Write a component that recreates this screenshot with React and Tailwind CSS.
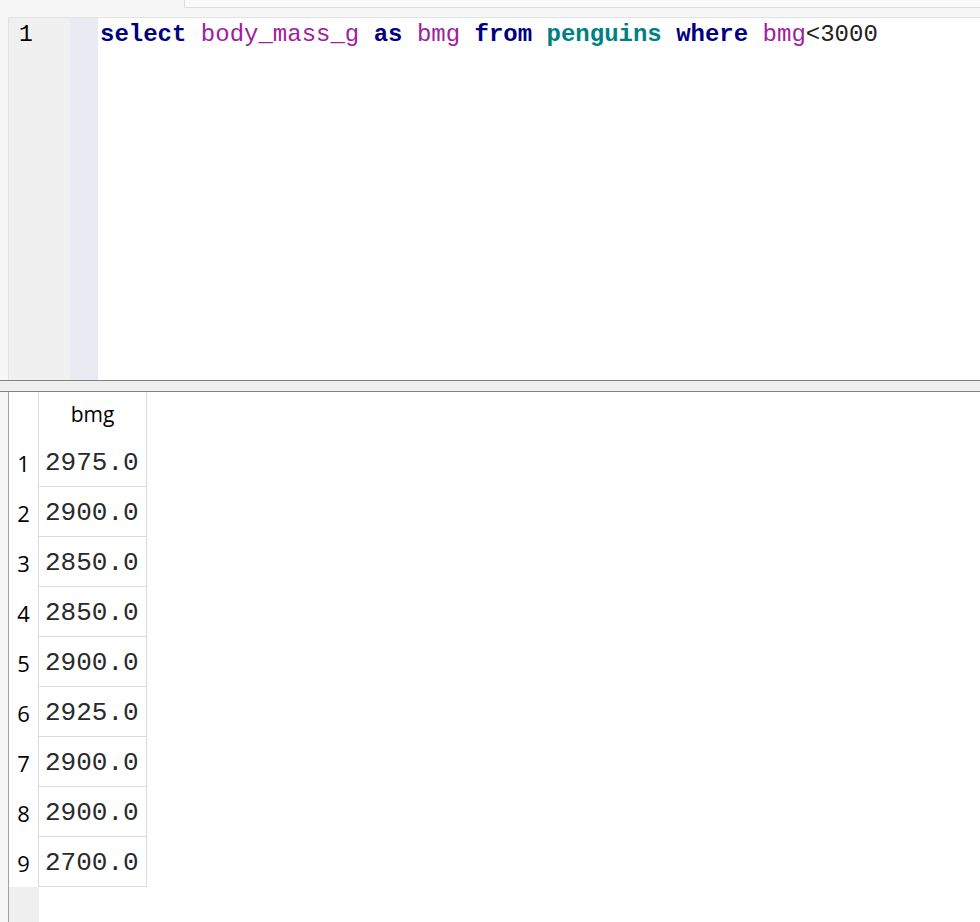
import React from 'react'

const rows = ['2975.0', '2900.0', '2850.0', '2850.0', '2900.0', '2925.0', '2900.0', '2900.0', '2700.0']

const mono = { fontFamily: '"Liberation Mono", "Courier New", monospace' }
const sans = { fontFamily: '"Open Sans", "Noto Sans", "Liberation Sans", sans-serif' }

function Editor() {
  return (
    <div className="flex h-[363px] border-t border-l border-[#e2e2e2] bg-white">
      <div className="w-[61px] bg-[#f0f0f0] pt-[1px] pl-[10px] text-[23px] leading-[32px] text-black" style={mono}>
        1
      </div>
      <div className="w-[28px] bg-[#eaeaf3]" />
      <div className="flex-1 pl-[2px] pt-[1px] text-[24px] leading-[32px] whitespace-pre" style={mono}>
        <span className="font-bold text-[#000080]">select</span>{' '}
        <span className="text-[#a020a0]">body_mass_g</span>{' '}
        <span className="font-bold text-[#000080]">as</span>{' '}
        <span className="text-[#a020a0]">bmg</span>{' '}
        <span className="font-bold text-[#000080]">from</span>{' '}
        <span className="font-bold text-[#008080]">penguins</span>{' '}
        <span className="font-bold text-[#000080]">where</span>{' '}
        <span className="text-[#a020a0]">bmg</span>
        <span className="text-[#222]">&lt;3000</span>
      </div>
    </div>
  )
}

function Results() {
  return (
    <div className="flex-1 flex flex-col bg-white border-l border-[#a0a0a0]">
      <div className="flex h-[45px]">
        <div className="w-[30px] border-r border-[#dcdcdc]" />
        <div className="w-[108px] border-r border-[#dcdcdc] flex items-center justify-center pt-[1px] text-[21px] text-black" style={sans}>
          bmg
        </div>
      </div>
      {rows.map((v, i) => (
        <div key={i} className="flex h-[50px]">
          <div className="w-[30px] border-r border-[#dcdcdc] flex items-center justify-center pt-[2px] text-[22px] text-black" style={sans}>
            {i + 1}
          </div>
          <div className="w-[108px] border-r border-b border-[#dcdcdc] flex items-center pl-[6px] pt-[3px] text-[26px] text-[#2a2a2a]" style={mono}>
            {v}
          </div>
        </div>
      ))}
      <div className="flex-1 w-[30px] bg-[#efefef]" />
    </div>
  )
}

export default function App() {
  return (
    <div className="w-[980px] h-[922px] bg-[#f7f7f7] flex flex-col overflow-hidden">
      <div className="h-[17px] shrink-0">
        <div className="ml-[184px] h-[8px] border-l border-b border-[#dedede] bg-[#fafafa]" />
      </div>
      <div className="flex-1 flex flex-col pl-[8px]">
        <Editor />
        <div className="h-[12px] shrink-0 border-y border-[#808080] bg-[#efefef] -ml-[8px]" />
        <Results />
      </div>
    </div>
  )
}
